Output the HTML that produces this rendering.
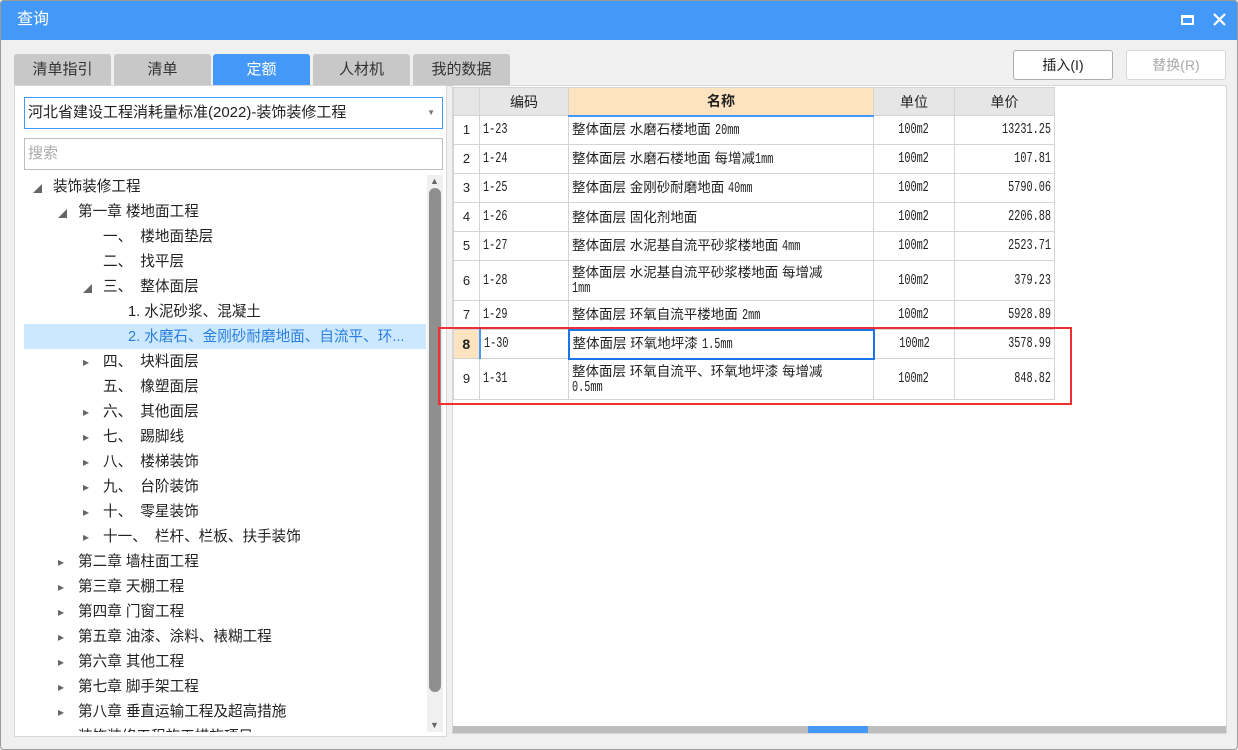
<!DOCTYPE html>
<html><head><meta charset="utf-8"><style>
*{margin:0;padding:0;box-sizing:border-box}
body{width:1238px;height:750px;overflow:hidden;background:#f0f0f0;font-family:"Liberation Sans","Noto Sans CJK SC",sans-serif;position:relative;font-size:14px;color:#222}
.a{position:absolute}
.title{left:0;top:0;width:1238px;height:40px;background:#4499f8;color:#fff;font-size:16px;line-height:40px;padding-left:17px;border-radius:4px 4px 0 0}
.tab{top:54px;height:32px;width:97px;background:#c8c8c8;text-align:center;line-height:32px;font-size:15px;color:#333;border-radius:3px 3px 0 0}
.btn{top:50px;height:30px;width:100px;background:#fff;border:1px solid #adadad;border-radius:3px;text-align:center;line-height:28px;font-size:14px}
.tr{height:25px;line-height:25px;font-size:14.6px;white-space:nowrap}
.arr{position:absolute;font-size:9px;color:#666}
table{border-collapse:collapse;font-size:13px;position:absolute;left:453px;top:87px}
td,th{border:1px solid #d4d4d4;padding:0 3px;font-weight:normal}
th{background:#e6e6e6;height:28px;font-size:14px}
td{font-family:"Liberation Mono","Noto Sans CJK SC",monospace;font-size:15px;line-height:14px}
td.n{text-align:center;background:#fff;font-family:"Liberation Sans",sans-serif;font-size:13px}
td.c{text-align:center}
td.r{text-align:right}
td.k{font-family:"Liberation Sans","Noto Sans CJK SC",sans-serif;font-size:13.5px;line-height:15px}
.m,.s{font-family:"Liberation Mono",monospace;font-size:15px;display:inline-block;transform:scaleX(0.68);transform-origin:left center;color:#222}
td.r .s{transform-origin:right center}
td.c .s{transform-origin:center}
</style></head><body>
<div class="a title">查询</div>
<div class="a" style="left:1181px;top:15px;width:13px;height:10px;border:2px solid #fff;border-top-width:3px"></div>
<svg class="a" style="left:1213px;top:13px" width="13" height="13"><path d="M1 1L12 12M12 1L1 12" stroke="#fff" stroke-width="2.2"/></svg>
<div class="a tab" style="left:14px">清单指引</div>
<div class="a tab" style="left:114px">清单</div>
<div class="a tab" style="left:213px;background:#4499f8;color:#fff">定额</div>
<div class="a tab" style="left:313px">人材机</div>
<div class="a tab" style="left:413px">我的数据</div>
<div class="a btn" style="left:1013px">插入(I)</div>
<div class="a btn" style="left:1126px;color:#aaa;border-color:#d6d6d6">替换(R)</div>
<div class="a" style="left:14px;top:85px;width:433px;height:652px;background:#fff;border:1px solid #d8d8d8"></div>
<div class="a" style="left:24px;top:97px;width:419px;height:32px;border:1px solid #4499f8;background:#fff;font-size:15px;line-height:30px;padding-left:3px">河北省建设工程消耗量标准(2022)-装饰装修工程<span style="position:absolute;right:7px;font-size:8px;color:#777">▼</span></div>
<div class="a" style="left:24px;top:138px;width:419px;height:32px;border:1px solid #bdbdbd;background:#fff;font-size:15px;line-height:30px;padding-left:3px;color:#aaa">搜索</div>
<div class="a" style="left:15px;top:175px;width:412px;height:557px;overflow:hidden">
<div class="a" style="left:9px;top:149px;width:402px;height:25px;background:#cce8ff"></div>
<div id="tree"></div>
</div>
<div class="a" style="left:427px;top:175px;width:16px;height:557px;background:#f0f0f0"></div>
<div class="a" style="left:430px;top:176px;font-size:9px;color:#666">▲</div>
<div class="a" style="left:429px;top:188px;width:12px;height:504px;background:#8f8f8f;border-radius:6px"></div>
<div class="a" style="left:430px;top:720px;font-size:9px;color:#666">▼</div>
<div class="a" style="left:452px;top:85px;width:775px;height:649px;background:#fff;border:1px solid #d8d8d8"></div>
<table>
<tr><th style="width:26px"></th><th style="width:89px">编码</th><th style="width:305px;background:#fde3bf;font-weight:bold;border-bottom:2px solid #4499f8">名称</th><th style="width:81px">单位</th><th style="width:100px">单价</th></tr>
<tr style="height:29px"><td class="n">1</td><td><span class="s">1-23</span></td><td class="k">整体面层 水磨石楼地面 <span class="m">20mm</span></td><td class="c"><span class="s">100m2</span></td><td class="r"><span class="s">13231.25</span></td></tr>
<tr style="height:29px"><td class="n">2</td><td><span class="s">1-24</span></td><td class="k">整体面层 水磨石楼地面 每增减<span class="m">1mm</span></td><td class="c"><span class="s">100m2</span></td><td class="r"><span class="s">107.81</span></td></tr>
<tr style="height:29px"><td class="n">3</td><td><span class="s">1-25</span></td><td class="k">整体面层 金刚砂耐磨地面 <span class="m">40mm</span></td><td class="c"><span class="s">100m2</span></td><td class="r"><span class="s">5790.06</span></td></tr>
<tr style="height:29px"><td class="n">4</td><td><span class="s">1-26</span></td><td class="k">整体面层 固化剂地面</td><td class="c"><span class="s">100m2</span></td><td class="r"><span class="s">2206.88</span></td></tr>
<tr style="height:29px"><td class="n">5</td><td><span class="s">1-27</span></td><td class="k">整体面层 水泥基自流平砂浆楼地面 <span class="m">4mm</span></td><td class="c"><span class="s">100m2</span></td><td class="r"><span class="s">2523.71</span></td></tr>
<tr style="height:40px"><td class="n">6</td><td><span class="s">1-28</span></td><td class="k">整体面层 水泥基自流平砂浆楼地面 每增减<br><span class="m">1mm</span></td><td class="c"><span class="s">100m2</span></td><td class="r"><span class="s">379.23</span></td></tr>
<tr style="height:29px"><td class="n">7</td><td><span class="s">1-29</span></td><td class="k">整体面层 环氧自流平楼地面 <span class="m">2mm</span></td><td class="c"><span class="s">100m2</span></td><td class="r"><span class="s">5928.89</span></td></tr>
<tr style="height:29px"><td class="n" style="background:#fde3bf;font-weight:bold;font-size:14px;border-right:2px solid #4499f8">8</td><td><span class="s">1-30</span></td><td class="k" style="border:2px solid #1a73e8">整体面层 环氧地坪漆 <span class="m">1.5mm</span></td><td class="c"><span class="s">100m2</span></td><td class="r"><span class="s">3578.99</span></td></tr>
<tr style="height:41px"><td class="n">9</td><td><span class="s">1-31</span></td><td class="k">整体面层 环氧自流平、环氧地坪漆 每增减<br><span class="m">0.5mm</span></td><td class="c"><span class="s">100m2</span></td><td class="r"><span class="s">848.82</span></td></tr>
</table>
<div class="a" style="left:438px;top:327px;width:634px;height:78px;border:2px solid #ee3030"></div>
<div class="a" style="left:453px;top:726px;width:773px;height:7px;background:#bdbdbd"></div>
<div class="a" style="left:808px;top:726px;width:60px;height:7px;background:#4499f8"></div>
<div class="a" style="left:0;top:0;width:1238px;height:750px;border:1px solid #9a9a9a;border-radius:4px;pointer-events:none"></div>
<script>
var items=[[0,'d','装饰装修工程'],[1,'d','第一章 楼地面工程'],[2,'','一、  楼地面垫层'],[2,'','二、  找平层'],[2,'d','三、  整体面层'],[3,'','1. 水泥砂浆、混凝土'],[3,'','2. 水磨石、金刚砂耐磨地面、自流平、环...'],[2,'r','四、  块料面层'],[2,'','五、  橡塑面层'],[2,'r','六、  其他面层'],[2,'r','七、  踢脚线'],[2,'r','八、  楼梯装饰'],[2,'r','九、  台阶装饰'],[2,'r','十、  零星装饰'],[2,'r','十一、  栏杆、栏板、扶手装饰'],[1,'r','第二章 墙柱面工程'],[1,'r','第三章 天棚工程'],[1,'r','第四章 门窗工程'],[1,'r','第五章 油漆、涂料、裱糊工程'],[1,'r','第六章 其他工程'],[1,'r','第七章 脚手架工程'],[1,'r','第八章 垂直运输工程及超高措施'],[1,'r','装饰装修工程施工措施项目']];
var h='';items.forEach(function(it,i){var x=38+25*it[0],y=i*25;
if(it[1])h+='<div class="arr" style="left:'+(x-20)+'px;top:'+(y+(it[1]=='d'?7:5))+'px;font-size:'+(it[1]=='d'?9:12)+'px">'+(it[1]=='d'?'◢':'▸')+'</div>';
h+='<div class="a tr" style="left:'+x+'px;top:'+y+'px;'+(i==6?'color:#2a7fe0':'')+'">'+it[2].replace(/  /g,'&nbsp;&nbsp;')+'</div>';});
document.getElementById('tree').innerHTML=h;
</script>
</body></html>
